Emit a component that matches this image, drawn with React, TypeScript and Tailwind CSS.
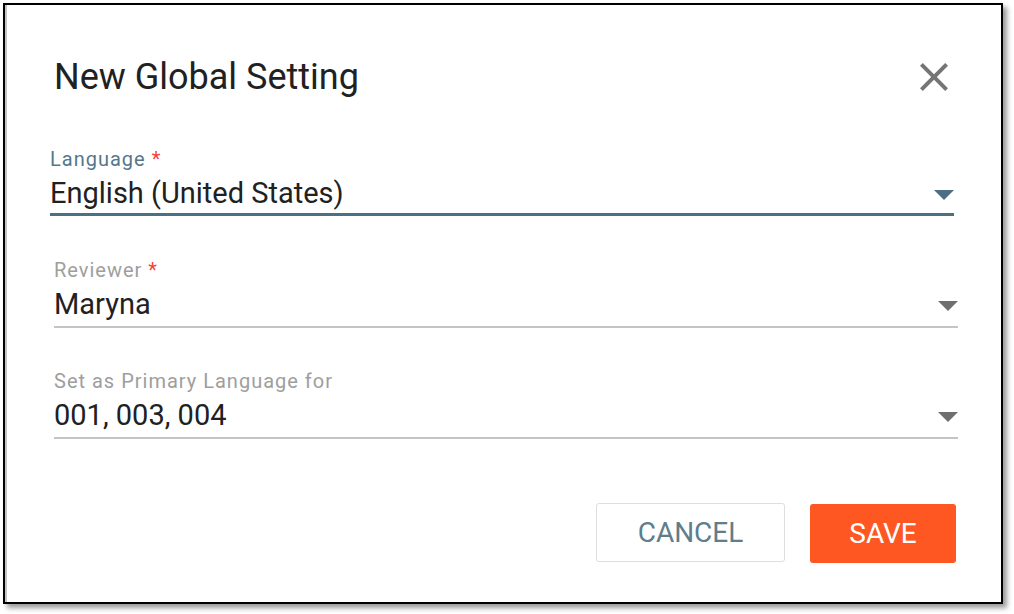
import React from 'react';

function Caret({ color }: { color: string }) {
  return (
    <svg width="20" height="10" viewBox="0 0 20 10" className="shrink-0">
      <path d="M0 0h20L10 10z" fill={color} />
    </svg>
  );
}

interface FieldProps {
  label: string;
  value: string;
  required?: boolean;
  focused?: boolean;
}

function SelectField({ label, value, required, focused }: FieldProps) {
  return (
    <div className={focused ? 'ml-[45px] w-[904px]' : 'ml-[49px] w-[904px]'}>
      <div className={`text-[20px] leading-[20px] tracking-[1px] ${focused ? 'text-[#55778b]' : 'text-[#9e9e9e]'}`}>
        {label}
        {required && <span className="text-[#f44336]"> *</span>}
      </div>
      <div
        className={`mt-[10px] flex items-center justify-between ${
          focused ? 'pb-[5px] border-b-[3px] border-[#4d6f84]' : 'pb-[7px] border-b-2 border-[#c4c4c4]'
        }`}
      >
        <span className="text-[29px] leading-[29px] text-[#212121]">{value}</span>
        <span className="translate-y-[1px]">
          <Caret color={focused ? '#4d6f84' : '#6f6f6f'} />
        </span>
      </div>
    </div>
  );
}

export default function App() {
  return (
    <div className="w-[1014px] h-[614px] bg-white pl-[3px] pt-[3px] font-['Roboto',sans-serif]">
      <div className="w-[1000px] h-[601px] bg-white border-2 border-black shadow-[4px_4px_5px_rgba(0,0,0,0.4),inset_2px_0_0_#c4c4c4]">
        {/* Header */}
        <header className="pt-[54px] pl-[49px] pr-[43px] h-[90px] flex items-start justify-between">
          <h1 className="text-[36px] leading-[36px] text-[#212121] font-normal">New Global Setting</h1>
          <button className="-mt-[6px] w-[48px] h-[48px] flex items-center justify-center">
            <svg width="48" height="48" viewBox="0 0 24 24" fill="#757575">
              <path d="M19 6.41 17.59 5 12 10.59 6.41 5 5 6.41 10.59 12 5 17.59 6.41 19 12 13.41 17.59 19 19 17.59 13.41 12z" />
            </svg>
          </button>
        </header>

        <div className="mt-[54px] flex flex-col">
          <SelectField label="Language" value="English (United States)" required focused />
          <div className="h-[44px]" />
          <SelectField label="Reviewer" value="Maryna" required />
          <div className="h-[43px]" />
          <SelectField label="Set as Primary Language for" value="001, 003, 004" />
        </div>

        <div className="mt-[64px] pr-[45px] flex justify-end items-start gap-[25px]">
          <button className="w-[189px] h-[59px] border border-[#dedede] rounded-[3px] text-[28px] text-[#607d8b] uppercase">
            Cancel
          </button>
          <button className="mt-px w-[146px] h-[59px] bg-[#ff5722] rounded-[3px] text-[28px] text-white uppercase">
            Save
          </button>
        </div>
      </div>
    </div>
  );
}
